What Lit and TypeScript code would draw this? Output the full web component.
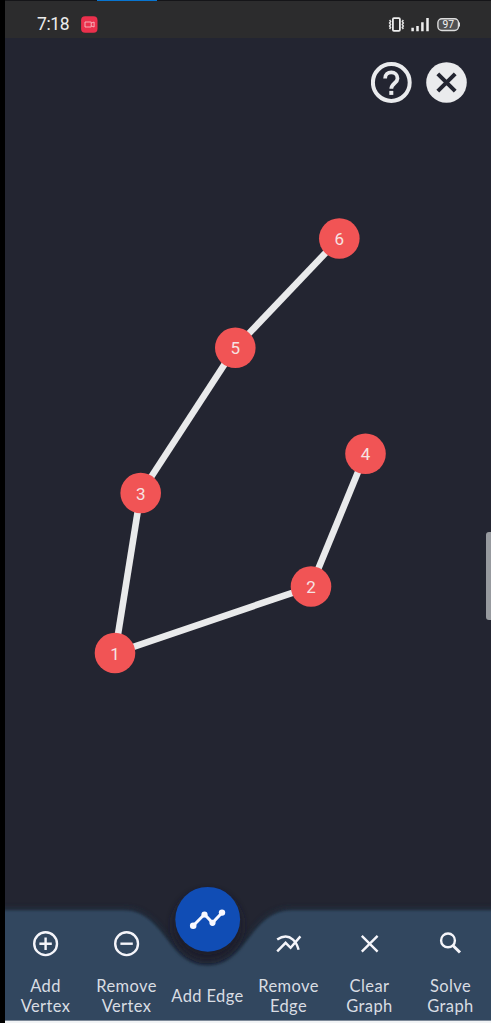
import { LitElement, html, svg, css } from "lit";
import { customElement } from "lit/decorators.js";

const vertices = [
  { id: 1, x: 110, y: 615 },
  { id: 2, x: 306, y: 548.5 },
  { id: 3, x: 135.7, y: 455 },
  { id: 4, x: 360.5, y: 415.8 },
  { id: 5, x: 230.3, y: 309.8 },
  { id: 6, x: 334.3, y: 200.5 },
];
const edges = [[6, 5], [5, 3], [3, 1], [1, 2], [2, 4]];
const at = (id: number) => vertices[id - 1];

const icons = {
  plus: svg`<circle cx="12.600" cy="12.700" r="11.400"/><path d="M12.600 6.500v12.400M6.400 12.700h12.400"/>`,
  minus: svg`<circle cx="12.600" cy="12.700" r="11.400"/><path d="M6.400 12.700h12.400"/>`,
  multi: svg`<path d="M1.200 20.400L9.600 11.800l5 5L24.400 5.400"/><path d="M1.200 8.600C6.600 4.800 12.600 4.600 17 8.600c3.200 2.900 4.600 6.400 5.600 10.200"/>`,
  clear: svg`<path d="M4.800 4.800l15.800 15.800M20.600 4.800L4.800 20.600"/>`,
  search: svg`<circle cx="10" cy="9.400" r="6.900"/><path stroke-width="3" d="M15.200 14.700L22 21.500"/>`,
};

@customElement("app-root")
export class AppRoot extends LitElement {
  static styles = css`
    :host {
      display: flex;
      flex-direction: column;
      box-sizing: border-box;
      height: 1023px;
      width: 491px;
      padding-left: 5px;
      background: #000;
      font-family: Roboto, sans-serif;
      overflow: hidden;
    }
    svg { display: block; fill: none; }
    .progress { height: 1px; background: #151518; flex: none; padding-left: 92px; }
    .progress-bar { width: 60px; height: 1px; background: #0875d1; }
    .status {
      height: 37px;
      flex: none;
      display: flex;
      align-items: center;
      box-sizing: border-box;
      padding: 9px 31px 0 32px;
      background: #2c2c2d;
      color: #ececec;
    }
    .time { font-size: 17.5px; line-height: 20px; width: 43.5px; letter-spacing: -0.35px; }
    .space { flex: 1; }
    .canvas {
      flex: 1;
      min-height: 0;
      display: grid;
      background: #232531;
    }
    .graph, .actions, .scroll { grid-area: 1 / 1; }
    .graph text { fill: #f6e3e3; font-size: 17px; text-anchor: middle; }
    .actions { justify-self: end; align-self: start; display: flex; gap: 14px; padding: 24px 24px 0 0; }
    .scroll {
      justify-self: end;
      align-self: start;
      width: 5px;
      height: 88px;
      margin-top: 494px;
      border-radius: 3px 0 0 3px;
      background: #979a9f;
    }
    .dock { height: 150px; flex: none; display: grid; background: #232531; }
    .shape, .tabs { grid-area: 1 / 1; }
    .tabs { display: grid; grid-template-columns: repeat(6, 81px); }
    .tab { display: flex; flex-direction: column; align-items: center; }
    .icon {
      height: 26px;
      margin-top: 61px;
      stroke: #f5f5fa;
      stroke-width: 2.4;
    }
    .label {
      display: flex;
      align-items: center;
      height: 40px;
      margin-top: 19px;
      font: 16.5px/20px Lato, sans-serif;
      letter-spacing: 0.38px;
      color: #d9dde3;
      text-align: center;
      white-space: pre;
    }
    .fab { height: 66px; margin: 16px 0 5px; }
    .base { height: 3px; flex: none; box-sizing: border-box; border-top: 1px solid #7c8998; background: #f2f4f6; }
  `;

  private tab(icon: unknown, label: string) {
    return html`<div class="tab">
      <svg class="icon" width="26" height="26" viewBox="0 0 26 26">${icon}</svg>
      <div class="label">${label}</div>
    </div>`;
  }

  render() {
    return html`
      <div class="progress"><div class="progress-bar"></div></div>
      <div class="status">
        <div class="time">7:18</div>
        <svg width="17" height="17" viewBox="0 0 17 17">
          <rect x=".1" y=".3" width="16.400" height="16.400" rx="4" fill="#eb304c"/>
          <path d="M4 6h6.200v5H4zM10.200 7.200l2.900-1.200v5l-2.900-1.200" stroke="#f6bbc2" stroke-width=".9"/>
        </svg>
        <div class="space"></div>
        <svg width="72" height="18" viewBox="388 15 72 18">
          <rect x="392.900" y="18.200" width="7" height="12.600" rx="1" stroke="#eee" stroke-width="1.800"/>
          <path d="M389.600 20l1 1.500-1 1.500 1 1.500-1 1.500 1 1.500-1 1.500M403.300 20l-1 1.500 1 1.500-1 1.500 1 1.500-1 1.500 1 1.500" stroke="#e4e4e4" stroke-width="1.500"/>
          <path d="M412.600 31.300v-3.500M417.500 31.300V26M422.400 31.300v-9M427.500 31.300V18" stroke="#eee" stroke-width="2.500"/>
          <rect x="437.900" y="18.700" width="20.600" height="11.800" rx="4" fill="#505052" stroke="#ddd" stroke-width="1.400"/>
          <path d="M459.400 22.500v4" stroke="#ddd" stroke-width="1.300"/>
          <text x="448.200" y="28.200" font-size="10.300" text-anchor="middle" fill="#f4f4f4">97</text>
        </svg>
      </div>
      <div class="canvas">
        <svg class="graph" width="486" height="832" viewBox="0 0 486 832">
          ${edges.map(([a, b]) => svg`<line x1=${at(a).x} y1=${at(a).y} x2=${at(b).x} y2=${at(b).y} stroke="#e9eaeb" stroke-width="6.600"/>`)}
          ${vertices.map((v) => svg`<circle cx=${v.x} cy=${v.y} r="20.300" fill="#f15455"/><text x=${v.x} y=${v.y + 6.6}>${v.id}</text>`)}
        </svg>
        <div class="actions">
          <svg width="41" height="41" viewBox="0 0 41 41" stroke="#eaebed">
            <circle cx="20.300" cy="20.500" r="18.400" stroke-width="4"/>
            <path d="M14.100 16.400C14.100 12.600 16.800 10.300 20.300 10.300s6.200 2.500 6.200 6.100c0 4.800-6.200 5.100-6.200 10.400" stroke-width="3.800"/>
            <path d="M20.300 28.900v4" stroke-width="4"/>
          </svg>
          <svg width="41" height="41" viewBox="0 0 41 41">
            <circle cx="20.500" cy="20.500" r="20.300" fill="#eaebed"/>
            <path d="M11.800 11.800l17.400 17.400M29.200 11.800L11.800 29.200" stroke="#232531" stroke-width="4"/>
          </svg>
        </div>
        <div class="scroll"></div>
      </div>
      <div class="dock">
        <svg class="shape" width="486" height="150" viewBox="0 0 486 150">
          <defs>
            <filter id="shade" x="-10%" y="-30%" width="120%" height="160%"><feGaussianBlur stdDeviation="3"/></filter>
            <filter id="soft" x="-10%" y="-30%" width="120%" height="160%"><feGaussianBlur stdDeviation="1"/></filter>
            <filter id="glow" x="-30%" y="-30%" width="160%" height="160%"><feGaussianBlur stdDeviation="4"/></filter>
          </defs>
          <path d="M-12 39H118C160 39 162 93 202.500 93S245 39 287 39H498V162H-12z" fill="#22354a" opacity=".8" filter="url(#shade)"/>
          <path d="M-12 40.500H118C160 40.500 162 95.500 202.500 95.500S245 40.500 287 40.500H498V162H-12z" fill="#30475f" filter="url(#soft)"/>
          <circle cx="202.500" cy="55.500" r="34" fill="#1b1e2b" filter="url(#glow)"/>
        </svg>
        <div class="tabs">
          ${this.tab(icons.plus, "Add\nVertex")}
          ${this.tab(icons.minus, "Remove\nVertex")}
          <div class="tab">
            <svg class="fab" width="66" height="66" viewBox="0 0 66 66">
              <circle cx="32.700" cy="33.300" r="32.400" fill="#104db5"/>
              <path d="M18.200 39.800L29.500 28.300l8 8.500L47 26.800" stroke="#f8f8ff" stroke-width="3"/>
              <g fill="#f8f8ff"><circle cx="18.200" cy="39.800" r="3.300"/><circle cx="29.500" cy="28.500" r="3.100"/><circle cx="37.500" cy="36.800" r="3.100"/><circle cx="47" cy="26.600" r="3.200"/></g>
            </svg>
            <div class="label">Add Edge</div>
          </div>
          ${this.tab(icons.multi, "Remove\nEdge")}
          ${this.tab(icons.clear, "Clear\nGraph")}
          ${this.tab(icons.search, "Solve\nGraph")}
        </div>
      </div>
      <div class="base"></div>
    `;
  }
}
